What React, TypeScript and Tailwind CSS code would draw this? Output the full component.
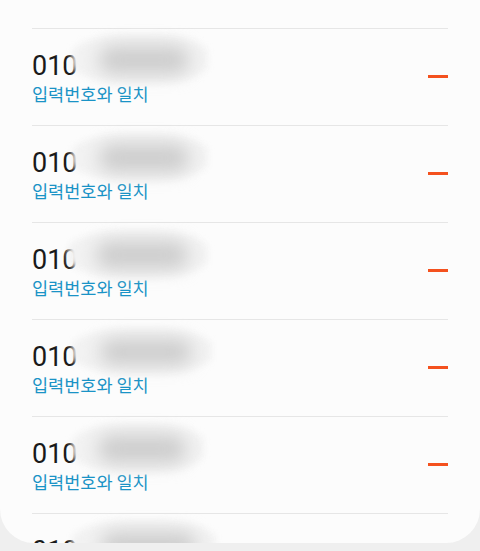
import React from "react";

type Blob = { left: number; top: number; w: number; h: number };

const rows: Blob[] = [
  { left: 72, top: 6, w: 136, h: 48 },
  { left: 72, top: 8, w: 136, h: 46 },
  { left: 68, top: 8, w: 140, h: 46 },
  { left: 72, top: 9, w: 140, h: 44 },
  { left: 72, top: 7, w: 132, h: 48 },
  { left: 72, top: 7, w: 144, h: 48 },
];

function Row({ blob }: { blob: Blob }) {
  return (
    <div className="relative border-t border-[#e6e6e6] h-[97px] flex items-center justify-between">
      <div className="flex flex-col pt-[1px]">
        <div
          className="text-[27px] leading-[32px] text-[#1a1a1a]"
          style={{ fontFamily: "Roboto, 'Noto Sans', sans-serif" }}
        >
          010
        </div>
        <div
          className="text-[17.5px] leading-[22px] text-[#1a93c6] mt-[1px]"
          style={{ fontFamily: "'Noto Sans CJK KR', 'Noto Sans', sans-serif" }}
        >
          입력번호와 일치
        </div>
      </div>
      <div className="w-[20px] h-[3px] bg-[#f4511e] -mt-[1px]" />
      <div
        className="absolute pointer-events-none"
        style={{ left: blob.left - 32, top: blob.top, width: blob.w, height: blob.h }}
      >
        <div className="absolute inset-0 rounded-[40%] bg-[#f2f2f2] blur-[3px]" />
        <div className="absolute left-[20%] right-[14%] top-[22%] bottom-[18%] rounded-full bg-[#cdcdcd] blur-[9px]" />
      </div>
    </div>
  );
}

export default function App() {
  return (
    <div className="w-[480px] h-[551px] bg-[#efefef] overflow-hidden">
      <div className="w-[480px] h-[543px] bg-[#fcfcfc] rounded-b-[34px] overflow-hidden pt-[28px] px-[32px]">
        {rows.map((b, i) => (
          <Row key={i} blob={b} />
        ))}
      </div>
    </div>
  );
}
